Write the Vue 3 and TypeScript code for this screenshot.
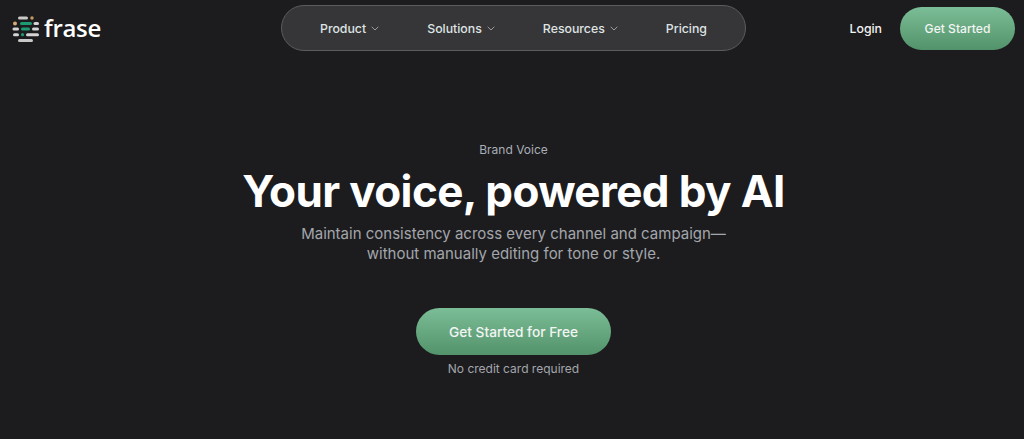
<script setup lang="ts">
const navItems = [
  { label: 'Product', caret: true },
  { label: 'Solutions', caret: true },
  { label: 'Resources', caret: true },
  { label: 'Pricing', caret: false },
]
</script>

<template>
  <div class="page">
    <header class="header">
      <div class="logo">
        <svg class="mark" width="28" height="28" viewBox="0 0 28 28">
          <rect x="6" y="1.5" width="10" height="3" rx="1.5" fill="#c9c9c9" />
          <circle cx="20" cy="3" r="1.7" fill="#c79a5e" />
          <circle cx="3" cy="8.5" r="2" fill="#d3ac74" />
          <rect x="8" y="7" width="12" height="3" rx="1.5" fill="#1c9a72" />
          <rect x="21.5" y="7" width="5.5" height="3" rx="1.5" fill="#d4d4d4" />
          <rect x="0.5" y="12.5" width="6.5" height="3" rx="1.5" fill="#d4d4d4" />
          <rect x="9" y="12.5" width="9" height="3" rx="1.5" fill="#1c9a72" />
          <rect x="20" y="12.5" width="7" height="3" rx="1.5" fill="#d4d4d4" />
          <rect x="1" y="18.2" width="6" height="3" rx="1.5" fill="#d4d4d4" />
          <circle cx="10.5" cy="19.7" r="1.6" fill="#1c9a72" />
          <rect x="14" y="18.2" width="13" height="3" rx="1.5" fill="#d4d4d4" />
          <rect x="6" y="24" width="15" height="3" rx="1.5" fill="#c9c9c9" />
        </svg>
        <span class="wordmark">frase</span>
      </div>

      <nav class="nav">
        <a v-for="item in navItems" :key="item.label" class="nav-item">
          {{ item.label }}
          <svg v-if="item.caret" class="caret" width="8" height="5" viewBox="0 0 8 5" fill="none">
            <path d="M0.7 0.8 L4 4 L7.3 0.8" stroke="#a8a8a8" stroke-width="0.9" />
          </svg>
        </a>
      </nav>

      <div class="actions">
        <a class="login">Login</a>
        <a class="btn btn-small">Get Started</a>
      </div>
    </header>

    <main class="hero">
      <p class="eyebrow">Brand Voice</p>
      <h1 class="title">Your voice, powered by AI</h1>
      <p class="lede">Maintain consistency across every channel and campaign—<br />without manually editing for tone or style.</p>
      <a class="btn btn-large">Get Started for Free</a>
      <p class="note">No credit card required</p>
    </main>
  </div>
</template>

<style>
html, body { margin: 0; background: #1c1c1e; }
</style>

<style scoped>
.page {
  width: 1024px;
  height: 439px;
  overflow: hidden;
  background: #1c1c1e;
  font-family: Inter, "Liberation Sans", sans-serif;
  color: #fff;
}
.header {
  display: grid;
  grid-template-columns: 281px 465px 1fr;
  align-items: center;
  padding-top: 5px;
}
.logo {
  display: flex;
  align-items: center;
  padding-left: 12px;
  gap: 4px;
}
.mark { flex: none; margin-top: 1px; }
.wordmark {
  font-family: "Open Sans", sans-serif;
  font-size: 24px;
  font-weight: 600;
  line-height: 28px;
  letter-spacing: -0.3px;
  color: #fff;
}
.nav {
  box-sizing: border-box;
  height: 46px;
  border: 1px solid #5c5c5e;
  border-radius: 23px;
  background: #363638;
  display: flex;
  align-items: center;
  justify-content: space-between;
  padding: 0 38px;
}
.nav-item {
  display: flex;
  align-items: center;
  gap: 5px;
  font-size: 12.3px;
  font-weight: 500;
  color: #dfe3e3;
}
.actions {
  display: flex;
  align-items: center;
  justify-content: flex-end;
  gap: 18px;
  padding-right: 9px;
}
.login {
  font-size: 12.3px;
  font-weight: 500;
  color: #f2f2f2;
}
.btn {
  display: flex;
  align-items: center;
  justify-content: center;
  box-sizing: border-box;
  border-radius: 999px;
  background: linear-gradient(180deg, #7bbd96, #53936c);
  color: #f2f5f2;
  font-weight: 500;
}
.btn-small { width: 115px; height: 43px; font-size: 12.1px; }
.btn-large { width: 195px; height: 47px; font-size: 13.7px; margin-top: 44px; }
.hero {
  display: flex;
  flex-direction: column;
  align-items: center;
  text-align: center;
  padding-left: 3px;
}
.eyebrow {
  margin: 91px 0 0;
  font-size: 12px;
  line-height: 16px;
  color: #a9aeb6;
}
.title {
  margin: 8px 0 0;
  font-size: 44px;
  line-height: 50px;
  font-weight: 700;
  letter-spacing: -0.62px;
  color: #fff;
}
.lede {
  margin: 8px 0 0;
  font-size: 15px;
  line-height: 20px;
  color: #a3a6ac;
}
.note {
  margin: 6px 0 0;
  font-size: 12px;
  line-height: 16px;
  color: #a3a6ac;
}
</style>
